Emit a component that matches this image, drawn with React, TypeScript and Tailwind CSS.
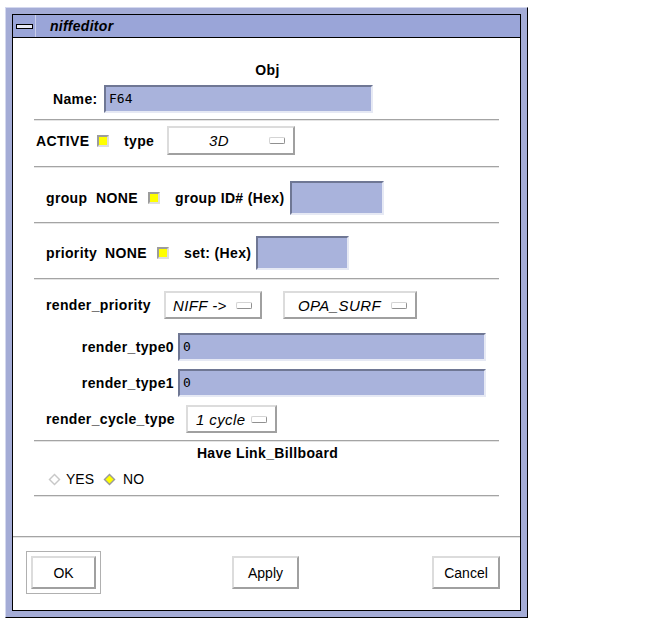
import React from "react";

const sep = "h-[2px] border-t border-t-[#a4a4a4] border-b border-b-[#e4e4e4]";
const input =
  "bg-[#a9b3dc] border-2 border-t-[#6f7794] border-l-[#6f7794] border-r-[#e6e9f4] border-b-[#e6e9f4] flex items-center pl-[3px] font-['DejaVu_Sans_Mono',monospace] text-[13px] text-black";
const raised =
  "bg-white border-2 border-t-[#dcdcdc] border-l-[#dcdcdc] border-r-[#a0a0a0] border-b-[#a0a0a0]";
const lbl = "font-bold text-[14px] leading-none tracking-[0.35px] whitespace-nowrap";

function Check() {
  return (
    <div className="w-[12px] h-[12px] border-2 border-t-[#9c9c9c] border-l-[#9c9c9c] border-r-[#dedede] border-b-[#dedede] bg-[#ffff00]" />
  );
}

function Indicator() {
  return (
    <div className="w-[16px] h-[7px] bg-white border border-t-[#d4d4d4] border-l-[#d4d4d4] border-r-[#909090] border-b-[#909090] rounded-[2px]" />
  );
}

function OptionBtn({ label, w, pl }: { label: string; w: string; pl: string }) {
  return (
    <div className={`${raised} ${w} h-full flex items-center`}>
      <span className={`${pl} flex-1 italic text-[15px] leading-none tracking-[0.4px] whitespace-nowrap`}>{label}</span>
      <div className="mr-[8px]">
        <Indicator />
      </div>
    </div>
  );
}

function Diamond({ on }: { on: boolean }) {
  return (
    <svg width="13" height="13" viewBox="0 0 13 13">
      <polygon points="6.5,0.5 12.5,6.5 6.5,12.5 0.5,6.5" fill={on ? "#9a9a9a" : "#c8c8c8"} />
      <polygon points="6.5,2.5 10.5,6.5 6.5,10.5 2.5,6.5" fill={on ? "#ffff00" : "#ffffff"} />
    </svg>
  );
}

export default function App() {
  return (
    <div className="w-[648px] h-[633px] bg-white pt-[7px] pl-[5px] font-['Liberation_Sans',Arial,sans-serif] text-black">
      <div className="w-[523px] h-[611px] bg-[#a4acd6] border border-t-[#d4d8ee] border-l-[#d4d8ee] border-r-black border-b-black p-[6px] flex flex-col">
        {/* title bar */}
        <div className="h-[24px] border border-black bg-[#9aa5d8] flex items-center shrink-0">
          <div className="w-[23px] h-full border-r border-r-[#c8cdea] flex items-center justify-center">
            <div className="w-[17px] h-[5px] bg-[#e8eaf6] border border-black" />
          </div>
          <span className="ml-[14px] italic font-bold text-[14px] leading-none tracking-[0.3px]">niffeditor</span>
        </div>
        {/* content */}
        <div className="flex-1 bg-white border-x border-b border-black flex flex-col">
          <div className={`mt-[22px] h-[20px] flex items-center justify-center pl-[2px] ${lbl}`}>Obj</div>
          {/* Name */}
          <div className="mt-[5px] h-[28px] flex items-center pl-[40px]">
            <span className={`w-[44px] ${lbl}`}>Name:</span>
            <div className={`${input} ml-[7px] w-[269px] h-full`}>F64</div>
          </div>
          <div className={`${sep} mt-[6px] ml-[21px] w-[465px]`} />
          {/* ACTIVE */}
          <div className="mt-[5px] h-[29px] flex items-center pl-[23px]">
            <span className={`w-[61px] ${lbl}`}>ACTIVE</span>
            <Check />
            <span className={`ml-[15px] w-[43px] ${lbl}`}>type</span>
            <div className="h-full">
              <div className={`${raised} w-[128px] h-full flex items-center`}>
                <span className="ml-[40px] flex-1 italic text-[15px] leading-none tracking-[0.4px]">3D</span>
                <div className="mr-[8px]"><Indicator /></div>
              </div>
            </div>
          </div>
          <div className={`${sep} mt-[11px] ml-[21px] w-[465px]`} />
          {/* group */}
          <div className="mt-[13px] h-[34px] flex items-center pl-[33px]">
            <span className={`w-[50px] ${lbl}`}>group</span>
            <span className={`w-[52px] ${lbl}`}>NONE</span>
            <Check />
            <span className={`ml-[15px] w-[115px] ${lbl}`}>group ID# (Hex)</span>
            <div className={`${input} w-[94px] h-full`} />
          </div>
          <div className={`${sep} mt-[7px] ml-[21px] w-[465px]`} />
          {/* priority */}
          <div className="mt-[12px] h-[34px] flex items-center pl-[33px]">
            <span className={`w-[59px] ${lbl}`}>priority</span>
            <span className={`w-[52px] ${lbl}`}>NONE</span>
            <Check />
            <span className={`ml-[15px] w-[72px] ${lbl}`}>set: (Hex)</span>
            <div className={`${input} w-[93px] h-full`} />
          </div>
          <div className={`${sep} mt-[8px] ml-[21px] w-[465px]`} />
          {/* render_priority */}
          <div className="mt-[11px] h-[28px] flex items-center pl-[33px]">
            <span className={`w-[118px] ${lbl}`}>render_priority</span>
            <div className="h-full">
              <OptionBtn label="NIFF ->" w="w-[98px]" pl="ml-[7px]" />
            </div>
            <div className="ml-[21px] h-full">
              <OptionBtn label="OPA_SURF" w="w-[134px]" pl="ml-[13px]" />
            </div>
          </div>
          {/* render_type0 */}
          <div className="mt-[14px] h-[28px] flex items-center pl-[33px]">
            <span className={`w-[128px] text-right ${lbl}`}>render_type0</span>
            <div className={`${input} ml-[4px] w-[308px] h-full`}>0</div>
          </div>
          <div className="mt-[8px] h-[28px] flex items-center pl-[33px]">
            <span className={`w-[128px] text-right ${lbl}`}>render_type1</span>
            <div className={`${input} ml-[4px] w-[308px] h-full`}>0</div>
          </div>
          {/* render_cycle_type */}
          <div className="mt-[8px] h-[28px] flex items-center pl-[33px]">
            <span className={`w-[140px] ${lbl}`}>render_cycle_type</span>
            <div className="h-full">
              <OptionBtn label="1 cycle" w="w-[91px]" pl="ml-[8px]" />
            </div>
          </div>
          <div className={`${sep} mt-[7px] ml-[21px] w-[465px]`} />
          <div className={`mt-[2px] h-[18px] flex items-center justify-center pl-[2px] ${lbl}`}>Have Link_Billboard</div>
          {/* radios */}
          <div className="mt-[8px] h-[18px] flex items-center pl-[35px] text-[14px] leading-none">
            <Diamond on={false} />
            <span className="ml-[5px]">YES</span>
            <div className="ml-[9px]"><Diamond on={true} /></div>
            <span className="ml-[7px]">NO</span>
          </div>
          <div className={`${sep} mt-[7px] ml-[21px] w-[465px]`} />
          <div className={`${sep} mt-[39px] w-full`} />
          {/* buttons */}
          <div className="mt-[13px] h-[43px] flex items-center text-[14px] leading-none">
            <div className="ml-[13px] w-[75px] h-[43px] border border-[#b0b0b0] p-[4px]">
              <div className={`${raised} w-full h-full flex items-center justify-center`}>OK</div>
            </div>
            <div className={`${raised} ml-[131px] w-[67px] h-[33px] flex items-center justify-center`}>Apply</div>
            <div className={`${raised} ml-[133px] w-[68px] h-[33px] flex items-center justify-center`}>Cancel</div>
          </div>
        </div>
      </div>
    </div>
  );
}
